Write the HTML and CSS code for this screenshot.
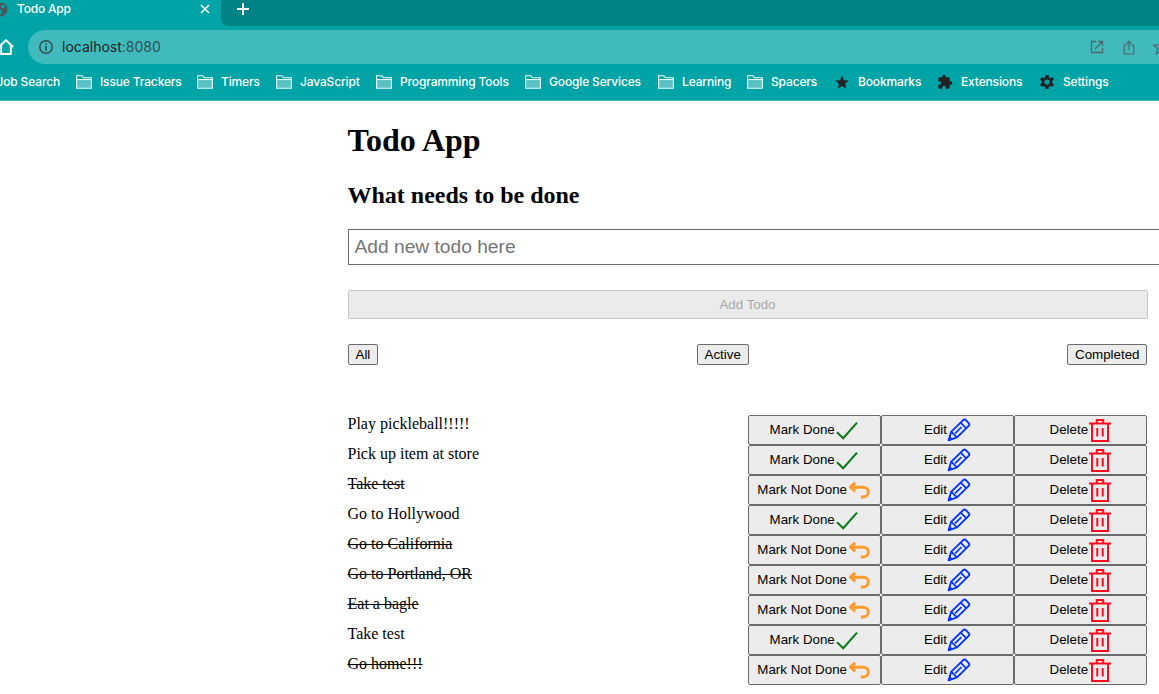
FILE: index.html
```html
<!DOCTYPE html>
<html lang="en">
<head>
<meta charset="utf-8">
<title>Todo App</title>
<link rel="stylesheet" href="styles.css">
</head>
<body>
<svg class="defs" aria-hidden="true">
  <symbol id="folder" viewBox="0 0 16 14"><path d="M1 5.500h14v7.500H1z" fill="#59c1c3"/><path d="M.6 13.300V.8h5.200l1.800 1.900h7.800v10.600zM.6 4.600h14.800" fill="none" stroke="#e8ffff" stroke-width="1.100"/></symbol>
  <symbol id="check" viewBox="0 0 24 24"><path d="M2 14.300l6.200 5.900L22 4.600" fill="none" stroke="#087a18" stroke-width="2"/></symbol>
  <symbol id="undo" viewBox="0 0 24 24"><path d="M8.200 4.800L3.400 9.200l4.800 4.100M3.600 9.200h12.800a4.900 4.900 0 0 1 0 9.800h-2.600" fill="none" stroke="#ff9a2e" stroke-width="3" stroke-linejoin="round"/></symbol>
  <symbol id="pencil" viewBox="0 0 24 24"><g fill="none" stroke="#0433ff" stroke-width="1.900" stroke-linejoin="round"><path d="M1.600 22.300l2.500-8.400L16.200 2.100q1.400-1.100 2.700.1l3 3.100q1 1.300-.2 2.500L10 19.400z"/><path d="M13.800 4.800l5.700 5.600M4.300 13.900l5.500 5.300M8 15.400l6.500-6.200" stroke-width="1.700"/></g><path d="M1.200 22.900l1.300-5.100 3.600 3.400z" fill="#0433ff"/></symbol>
  <symbol id="trash" viewBox="0 0 24 24"><path d="M1 5.500h22M4 5.500V23h16V5.500M8.800 5V1.900h6.400V5M9.300 10v8.600M14.700 10v8.600" fill="none" stroke="#ff0a1f" stroke-width="2"/></symbol>
</svg>

<header class="browser">
  <div class="tabs">
    <div class="tab">
      <svg class="globe" viewBox="0 0 16 16"><circle cx="8" cy="8" r="7.500" fill="#4b5659"/><path d="M8.500 3.500l3-.5 1.500 2-2 2-2.500-.5zM4 8h4l2 2-1.500 3.500-2-1.500z" fill="#00a3a6"/></svg>
      <span class="tab-title">Todo App</span>
      <svg class="close" viewBox="0 0 10 10"><path d="M1 1l8 8M9 1L1 9" stroke="#fff" stroke-width="1.500"/></svg>
    </div>
    <div class="strip"><svg class="plus" viewBox="0 0 12 12"><path d="M6 0v12M0 6h12" stroke="#fff" stroke-width="2"/></svg></div>
  </div>
  <div class="toolbar">
    <svg class="home" viewBox="0 0 16 16"><path d="M.8 8L8 1.200 15.200 8M3.200 6.500V15h9.600V6.500" fill="none" stroke="#fff" stroke-width="1.900"/></svg>
    <div class="omnibox">
      <svg class="info" viewBox="0 0 14 14"><circle cx="7" cy="7" r="6.200" fill="none" stroke="#35474a" stroke-width="1.400"/><path d="M7 6v4.500M7 3.200v1.600" stroke="#35474a" stroke-width="1.600"/></svg>
      <span class="url">localhost<span class="port">:8080</span></span>
      <svg class="open" viewBox="0 0 14 14"><path d="M6 1.500H1.500v11h11V8M8 1.500h4.500V6M12.500 1.500L5 9" fill="none" stroke="#4f696c" stroke-width="1.300"/></svg>
      <svg class="share" viewBox="0 0 12 15"><path d="M4 5H1.200v9h9.600V5H8M6 10V1.200M3.300 3.800L6 1.100l2.700 2.700" fill="none" stroke="#4f696c" stroke-width="1.200"/></svg>
      <svg class="fav" viewBox="0 0 16 16"><path d="M8 1.200l2 4.700 5 .5-3.800 3.300 1.200 5L8 12l-4.400 2.700 1.200-5L1 6.400l5-.5z" fill="none" stroke="#4f696c" stroke-width="1.300"/></svg>
    </div>
  </div>
  <nav class="bookmarks">
    <span class="bm job">Job Search</span>
    <span class="bm w121"><svg class="bi"><use href="#folder"/></svg>Issue Trackers</span>
    <span class="bm w79"><svg class="bi"><use href="#folder"/></svg>Timers</span>
    <span class="bm w100"><svg class="bi"><use href="#folder"/></svg>JavaScript</span>
    <span class="bm w149"><svg class="bi"><use href="#folder"/></svg>Programming Tools</span>
    <span class="bm w133"><svg class="bi"><use href="#folder"/></svg>Google Services</span>
    <span class="bm w89"><svg class="bi"><use href="#folder"/></svg>Learning</span>
    <span class="bm w87"><svg class="bi"><use href="#folder"/></svg>Spacers</span>
    <span class="bm w103"><svg class="bi glyph" viewBox="0 0 16 16"><path d="M8 1.400l1.900 4.800 5 .3-3.900 3.200 1.300 4.900L8 11.900l-4.300 2.700L5 9.700 1.100 6.500l5-.3z" fill="#202224"/></svg>Bookmarks</span>
    <span class="bm w102"><svg class="bi glyph" viewBox="0 0 24 24"><path d="M20.500 11H19V7a2 2 0 0 0-2-2h-4V3.500a2.500 2.500 0 0 0-5 0V5H4a2 2 0 0 0-2 2v3.800h1.500a2.700 2.700 0 0 1 0 5.400H2V20a2 2 0 0 0 2 2h3.800v-1.500a2.700 2.700 0 0 1 5.400 0V22H17a2 2 0 0 0 2-2v-4h1.500a2.500 2.500 0 0 0 0-5z" fill="#202224"/></svg>Extensions</span>
    <span class="bm"><svg class="bi glyph" viewBox="0 0 16 16"><g fill="none" stroke="#202224"><circle cx="8" cy="8" r="3.900" stroke-width="2.700"/><path d="M8 .9v2.600M8 12.500v2.600M1.850 4.450l2.250 1.300M11.900 10.250l2.250 1.300M1.850 11.550l2.250-1.300M11.900 5.750l2.250-1.300" stroke-width="3.200"/></g></svg>Settings</span>
  </nav>
</header>

<main class="app">
  <h1>Todo App</h1>
  <h2>What needs to be done</h2>
  <input class="new-todo" type="text" placeholder="Add new todo here">
  <button class="add" disabled>Add Todo</button>
  <div class="filters"><button>All</button><button>Active</button><button>Completed</button></div>
  <ul class="todos">
    <li><span>Play pickleball!!!!!</span><div class="actions"><button>Mark Done<svg><use href="#check"/></svg></button><button>Edit<svg><use href="#pencil"/></svg></button><button>Delete<svg><use href="#trash"/></svg></button></div></li>
    <li><span>Pick up item at store</span><div class="actions"><button>Mark Done<svg><use href="#check"/></svg></button><button>Edit<svg><use href="#pencil"/></svg></button><button>Delete<svg><use href="#trash"/></svg></button></div></li>
    <li><span class="done">Take test</span><div class="actions"><button>Mark Not Done<svg><use href="#undo"/></svg></button><button>Edit<svg><use href="#pencil"/></svg></button><button>Delete<svg><use href="#trash"/></svg></button></div></li>
    <li><span>Go to Hollywood</span><div class="actions"><button>Mark Done<svg><use href="#check"/></svg></button><button>Edit<svg><use href="#pencil"/></svg></button><button>Delete<svg><use href="#trash"/></svg></button></div></li>
    <li><span class="done">Go to California</span><div class="actions"><button>Mark Not Done<svg><use href="#undo"/></svg></button><button>Edit<svg><use href="#pencil"/></svg></button><button>Delete<svg><use href="#trash"/></svg></button></div></li>
    <li><span class="done">Go to Portland, OR</span><div class="actions"><button>Mark Not Done<svg><use href="#undo"/></svg></button><button>Edit<svg><use href="#pencil"/></svg></button><button>Delete<svg><use href="#trash"/></svg></button></div></li>
    <li><span class="done">Eat a bagle</span><div class="actions"><button>Mark Not Done<svg><use href="#undo"/></svg></button><button>Edit<svg><use href="#pencil"/></svg></button><button>Delete<svg><use href="#trash"/></svg></button></div></li>
    <li><span>Take test</span><div class="actions"><button>Mark Done<svg><use href="#check"/></svg></button><button>Edit<svg><use href="#pencil"/></svg></button><button>Delete<svg><use href="#trash"/></svg></button></div></li>
    <li><span class="done">Go home!!!</span><div class="actions"><button>Mark Not Done<svg><use href="#undo"/></svg></button><button>Edit<svg><use href="#pencil"/></svg></button><button>Delete<svg><use href="#trash"/></svg></button></div></li>
  </ul>
</main>
</body>
</html>
```

FILE: styles.css
```css
* { box-sizing: border-box; }
body { margin: 0; height: 694px; overflow: hidden; background: #fff; color: #000; font-family: "Liberation Serif", serif; font-size: 16px; }
.defs { display: none; }
svg { flex: none; display: block; }

.browser { height: 101px; background: #00a3a6; border-bottom: 1px solid #40babd; color: #fff; font-family: Inter, sans-serif; overflow: hidden; }
.tabs { display: flex; height: 26px; }
.tab { width: 221px; display: flex; align-items: center; padding: 0 11px 8px 0; }
.globe { width: 15px; height: 15px; margin-left: -7px; }
.tab-title { margin-left: 9px; flex: 1; font-size: 12px; font-weight: 500; line-height: 18px; letter-spacing: -.2px; }
.close { width: 10px; height: 10px; }
.strip { flex: 1; background: #008387; border-bottom-left-radius: 8px; padding: 3px 0 0 16px; }
.plus { width: 12px; height: 12px; }

.toolbar { display: flex; height: 38px; padding-top: 4px; align-items: center; }
.home { width: 16px; height: 16px; margin-left: -2px; margin-right: 14px; }
.omnibox { flex: 1; height: 34px; background: #40babd; border-radius: 17px 0 0 17px; display: flex; align-items: center; padding-left: 11px; overflow: hidden; }
.info { width: 14px; height: 14px; margin-right: 9px; }
.url { flex: 1; font-size: 14px; line-height: 18px; color: #1f2426; padding-bottom: 1px; }
.port { color: #2b5356; }
.open { width: 14px; height: 14px; margin-right: 19px; }
.share { width: 12px; height: 15px; margin-right: 18px; }
.fav { width: 16px; height: 16px; margin-right: -10px; }

.bookmarks { display: flex; height: 36px; align-items: center; padding-bottom: 1px; font-size: 12px; font-weight: 500; letter-spacing: -.15px; white-space: nowrap; }
.bm { flex: none; display: flex; align-items: center; gap: 8px; }
.bi { width: 16px; height: 14px; }
.glyph { height: 16px; }
.job { width: 76px; justify-content: flex-end; padding-right: 16px; }
.w121 { width: 121px; }
.w79 { width: 79px; }
.w100 { width: 100px; }
.w149 { width: 149px; }
.w133 { width: 133px; }
.w89 { width: 89px; }
.w87 { width: 87px; }
.w103 { width: 103px; }
.w102 { width: 102px; }

.app { width: 800px; margin-left: 347.5px; padding-top: 21px; }
h1 { margin: 0; font-size: 32px; line-height: 37px; }
h2 { margin: 22px 0 0; font-size: 24px; line-height: 28px; }
button, input { font-family: "Liberation Sans", Arial, sans-serif; }
.new-todo { display: block; width: 820px; height: 36px; margin-top: 20px; border: 1px solid #6b6b6b; border-radius: 0; padding: 0 6px; font-size: 19.2px; }
.new-todo::placeholder { color: #757575; }
button { border: 1px solid #6b6b6b; border-radius: 2px; background: #ececec; color: #000; font-size: 13.333px; padding: 0; }
.add { display: block; width: 800px; height: 29px; margin-top: 25px; border-color: #c6c6c6; background: #ebebeb; color: #a9a9a9; }
.filters { display: flex; justify-content: space-between; margin-top: 25px; }
.filters button { height: 21px; padding: 0 7px; line-height: 19px; }
.todos { list-style: none; margin: 50px 0 0; padding: 0; }
.todos li { display: grid; grid-template-columns: 1fr 1fr; height: 30px; line-height: 18px; }
.done { text-decoration: line-through; }
.actions { display: grid; grid-template-columns: repeat(3, 1fr); }
.actions button { height: 30px; display: flex; align-items: center; justify-content: center; line-height: 28px; padding-bottom: 1px; }
.actions svg { width: 24px; height: 24px; margin-top: 0; }
```
